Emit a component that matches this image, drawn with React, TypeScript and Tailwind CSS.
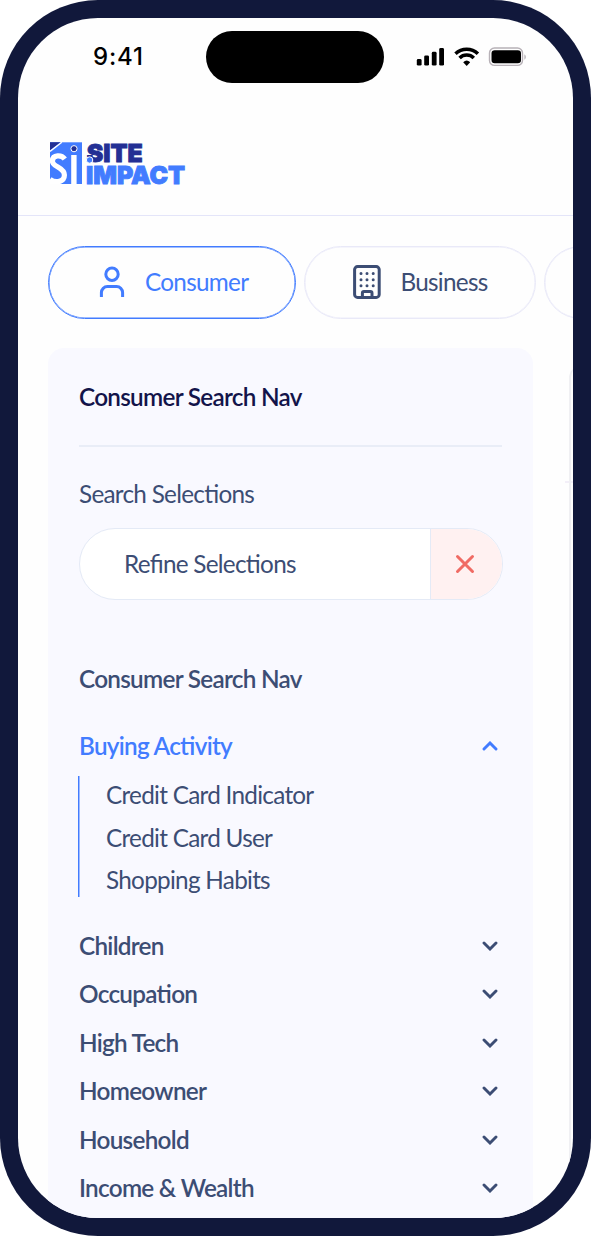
import React, { useState } from "react";

const categories = [
  "Children",
  "Occupation",
  "High Tech",
  "Homeowner",
  "Household",
  "Income & Wealth",
];

const buyingActivity = [
  "Credit Card Indicator",
  "Credit Card User",
  "Shopping Habits",
];

const Chevron = ({ up }: { up?: boolean }) => (
  <svg width="16" height="10" viewBox="0 0 16 10" fill="none" className="mr-1">
    <path
      d={up ? "M2 8L8 2L14 8" : "M2 2L8 8L14 2"}
      stroke="currentColor"
      strokeWidth="2.9"
      strokeLinecap="round"
    />
  </svg>
);

const StatusBar = () => (
  <div className="flex h-[78px] items-center">
    <p className="ml-[75px] w-[113px] font-['Inter'] text-[24px] font-medium leading-none tracking-[0.8px] text-black">
      9:41
    </p>
    <div className="-mt-px h-[52px] w-[178px] rounded-full bg-black" />
    <svg width="112" height="24" viewBox="0 0 112 24" className="ml-8">
      <rect x="0.8" y="14" width="4.8" height="6.6" rx="1.4" />
      <rect x="8.2" y="10.4" width="4.8" height="10.2" rx="1.4" />
      <rect x="15.8" y="6.8" width="4.8" height="13.8" rx="1.4" />
      <rect x="23.2" y="3" width="4.8" height="17.6" rx="1.4" />
      <g fill="none" stroke="black" strokeWidth="3.5">
        <path d="M39.5 8.7a16 16 0 0 1 22.4 0" />
        <path d="M43.6 13a10 10 0 0 1 14.2 0" />
      </g>
      <path d="M50.7 20.9l-3.5-3.7a5.2 5.2 0 0 1 7 0z" />
      <rect x="73.5" y="3" width="33" height="17.4" rx="5" fill="none" stroke="#b7b1b7" strokeWidth="1.4" />
      <rect x="75.5" y="5.2" width="29.5" height="13" rx="3.2" />
      <path d="M108.4 9.2a3.4 3.4 0 0 1 0 5.6z" fill="#b7b1b7" />
    </svg>
  </div>
);

const Logo = () => (
  <svg width="140" height="50" viewBox="0 0 140 50" className="overflow-visible tracking-normal">
    <rect x="0" y="0.3" width="32" height="41.7" fill="#427cff" />
    <path d="M0 0.3H10.5L0 8.4z" fill="#232f94" />
    <path d="M0 9.4L11.8 0.2" stroke="white" strokeWidth="1.4" />
    <path
      d="M14.8 17C11.6 12.6 2.8 12.4 2.4 18.8C2 25.3 14.4 25 14.4 33C14.4 40.3 5.5 41.3 0 37.3"
      fill="none"
      stroke="white"
      strokeWidth="5.2"
    />
    <path d="M0 38L13 42.2H0z" fill="white" />
    <rect x="21.2" y="13" width="5.4" height="29.2" fill="white" />
    <circle cx="24" cy="6.7" r="3.1" fill="#232f94" stroke="white" strokeWidth="1" />
    <g className="font-['Inter'] text-[25px] font-black" strokeWidth="0.9">
      <text x="36.8" y="20" textLength="56" lengthAdjust="spacingAndGlyphs" fill="#232f94" stroke="#232f94">
        SITE
      </text>
      <text x="36" y="41.5" textLength="99" lengthAdjust="spacingAndGlyphs" fill="#427cff" stroke="#427cff">
        IMPACT
      </text>
    </g>
    <path d="M36 20.6h7v3h-7z" fill="#fefefe" />
    <circle cx="39.6" cy="18" r="3.2" fill="#427cff" stroke="white" strokeWidth="1" />
  </svg>
);

const ConsumerIcon = () => (
  <svg width="26" height="32" viewBox="0 0 26 32" fill="none" stroke="currentColor" strokeWidth="3">
    <circle cx="13" cy="8.3" r="6.2" />
    <path d="M2.4 31V26.5A6 6 0 0 1 8.4 20.6H17.6A6 6 0 0 1 23.6 26.5V31" />
  </svg>
);

const BusinessIcon = () => (
  <svg width="28" height="34" viewBox="0 0 28 34" fill="none" stroke="currentColor" strokeWidth="3">
    <rect x="1.6" y="1.6" width="24.6" height="30.8" rx="3" />
    <path d="M9.4 32V28.2Q9.4 26.6 11 26.6H17.4Q19 26.6 19 28.2V32" />
    <path
      d="M8 8.6H8.01M14 8.6H14.01M20.2 8.6H20.21M8 14.7H8.01M14 14.7H14.01M20.2 14.7H20.21M8 20.8H8.01M14 20.8H14.01M20.2 20.8H20.21"
      strokeLinecap="round"
    />
  </svg>
);

const App = () => {
  const [open, setOpen] = useState<boolean>(true);

  return (
    <div className="h-[1236px] w-[591px] overflow-hidden bg-white">
      <div className="h-full rounded-[98px] bg-[#11183b] p-[18px]">
        <div className="h-full overflow-hidden rounded-[80px] bg-[#fefefe] font-['Lato',sans-serif] text-[24.3px] tracking-[-0.72px] text-[#3c4d74] [font-feature-settings:'liga']">
          <StatusBar />
          <header className="flex h-[120px] items-start border-b border-[#e4e5f9] pl-8 pt-[46px]">
            <Logo />
          </header>

          <div className="ml-[30px] mt-[30px] flex gap-2">
            <button className="flex h-[72.5px] w-[247.5px] shrink-0 items-center rounded-full border border-[#427cff] pl-[49.5px] text-[#427cff] shadow-[inset_0_0_0_0.5px_#427cff]">
              <ConsumerIcon />
              <span className="ml-[20.5px]">Consumer</span>
            </button>
            <button className="flex h-[72.5px] w-[232px] shrink-0 items-center rounded-full border border-[#e9e9f8] pl-[48px] shadow-[inset_0_0_0_0.5px_#ebebf9]">
              <BusinessIcon />
              <span className="ml-[20px]">Business</span>
            </button>
            <button className="h-[72.5px] w-[232px] shrink-0 rounded-full border border-[#e9e9f8] shadow-[inset_0_0_0_0.5px_#ebebf9]" />
          </div>

          <div className="mt-[29.5px] flex">
            <div className="ml-[30px] h-[900px] w-[485px] shrink-0 rounded-[16px] bg-[#f9f9ff] px-[31px]">
              <h1 className="flex h-[99px] items-center border-b-2 border-[#e9edf7] pt-[2px] font-semibold text-[#13144a]">
                Consumer Search Nav
              </h1>
              <p className="mt-[31px] leading-[32px]">Search Selections</p>
              <div className="mt-[18px] flex h-[72px] w-[424px] overflow-hidden rounded-full border border-[#e4eaf6] bg-white">
                <p className="flex flex-1 items-center pl-[44px]">Refine Selections</p>
                <button className="flex w-[72px] items-center border-l border-[#e4eaf6] bg-[#fff1f1] pl-[24px] text-[#f06b64]">
                  <svg width="20" height="20" viewBox="0 0 20 20">
                    <path d="M2.5 2.5L17.5 17.5M17.5 2.5L2.5 17.5" stroke="currentColor" strokeWidth="3" strokeLinecap="round" />
                  </svg>
                </button>
              </div>

              <h2 className="mt-[63px] font-semibold leading-[32px]">Consumer Search Nav</h2>
              <button
                onClick={() => setOpen((prev) => !prev)}
                className="mt-[27px] flex h-[48px] w-full items-center justify-between font-semibold text-[#427cff]"
              >
                Buying Activity
                <Chevron up={open} />
              </button>
              {open && (
                <ul className="-ml-px mt-[6px] flex h-[121px] flex-col border-l border-[#427cff] pl-[27px] shadow-[inset_0.5px_0_0_#427cff]">
                  {buyingActivity.map((item) => (
                    <li key={item} className="h-[42.5px] shrink-0 leading-[37px]">
                      {item}
                    </li>
                  ))}
                </ul>
              )}
              <div className="mt-[24.5px]">
                {categories.map((category) => (
                  <button
                    key={category}
                    className="flex h-[48.5px] w-full items-center justify-between font-semibold"
                  >
                    {category}
                    <Chevron />
                  </button>
                ))}
              </div>
            </div>
            <div className="ml-[32px] mt-[133px] h-[2px] w-[4px] shrink-0 bg-[#f3eff8]" />
            <div className="mt-[18px] h-[860px] w-[240px] shrink-0 rounded-tl-[12px] border-l-2 border-[#f0f0f3]">
              <div className="mt-[115px] h-[2px] bg-[#f3eff8]" />
            </div>
          </div>
        </div>
      </div>
    </div>
  );
};

export default App;
